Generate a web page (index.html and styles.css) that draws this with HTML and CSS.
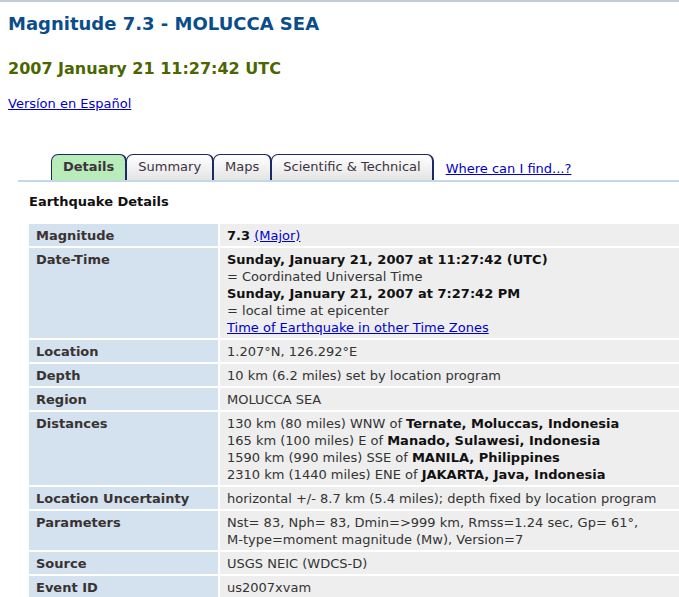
FILE: index.html
```html
<!DOCTYPE html>
<html lang="en">
<head>
    <meta charset="UTF-8">
    <title>Magnitude 7.3 - MOLUCCA SEA</title>
    <link rel="stylesheet" href="styles.css">
</head>
<body>
    <div class="page">
        <h1 class="title">Magnitude 7.3 - MOLUCCA SEA</h1>
        <h2 class="date">2007 January 21 11:27:42 UTC</h2>
        <p class="lang"><a href="#">Versíon en Español</a></p>

        <div class="tabbar">
            <ul class="tabs">
                <li class="tab active">Details</li>
                <li class="tab">Summary</li>
                <li class="tab">Maps</li>
                <li class="tab">Scientific &amp; Technical</li>
            </ul>
            <a class="tab-help" href="#">Where can I find...?</a>
        </div>

        <div class="details">
            <h3>Earthquake Details</h3>
            <div class="info">
                <div class="label">Magnitude</div>
                <div class="value"><b>7.3</b> <a href="#">(Major)</a></div>

                <div class="label">Date-Time</div>
                <div class="value">
                    <b>Sunday, January 21, 2007 at 11:27:42 (UTC)</b><br>
                    = Coordinated Universal Time<br>
                    <b>Sunday, January 21, 2007 at 7:27:42 PM</b><br>
                    = local time at epicenter<br>
                    <a href="#">Time of Earthquake in other Time Zones</a>
                </div>

                <div class="label">Location</div>
                <div class="value">1.207°N, 126.292°E</div>

                <div class="label">Depth</div>
                <div class="value">10 km (6.2 miles) set by location program</div>

                <div class="label">Region</div>
                <div class="value">MOLUCCA SEA</div>

                <div class="label">Distances</div>
                <div class="value">
                    130 km (80 miles) WNW of <b>Ternate, Moluccas, Indonesia</b><br>
                    165 km (100 miles) E of <b>Manado, Sulawesi, Indonesia</b><br>
                    1590 km (990 miles) SSE of <b>MANILA, Philippines</b><br>
                    2310 km (1440 miles) ENE of <b>JAKARTA, Java, Indonesia</b>
                </div>

                <div class="label">Location Uncertainty</div>
                <div class="value">horizontal +/- 8.7 km (5.4 miles); depth fixed by location program</div>

                <div class="label">Parameters</div>
                <div class="value">
                    Nst= 83, Nph= 83, Dmin=&gt;999 km, Rmss=1.24 sec, Gp= 61°,<br>
                    M-type=moment magnitude (Mw), Version=7
                </div>

                <div class="label">Source</div>
                <div class="value">USGS NEIC (WDCS-D)</div>

                <div class="label">Event ID</div>
                <div class="value">us2007xvam</div>
            </div>
        </div>
    </div>
</body>
</html>
```

FILE: styles.css
```css
html, body {
    margin: 0;
    padding: 0;
    overflow: hidden;
}
body {
    font-family: "DejaVu Sans", Verdana, sans-serif;
    font-size: 13px;
    color: #333;
    background: #fff;
    border-top: 2px solid #c3cdd6;
}
a {
    color: #0000cc;
}
.page {
    padding: 0 0 0 8px;
}
.title {
    color: #0b4d8b;
    font-size: 18px;
    margin: 0;
    padding-top: 11px;
    line-height: 21px;
}
.date {
    color: #4b6600;
    font-size: 16px;
    margin: 25px 0 0;
    line-height: 19px;
}
.lang {
    margin: 17px 0 0;
    line-height: 17px;
}

/* tabs */
.tabbar {
    display: flex;
    align-items: flex-end;
    margin: 42px 0 0 10px;
    padding-left: 33px;
    border-bottom: 2px solid #c5d8e6;
}
.tabs {
    display: flex;
    list-style: none;
    margin: 0;
    padding: 0;
}
.tab {
    height: 25px;
    line-height: 24px;
    padding: 0 11px;
    border: 1px solid #1b2a66;
    border-right-width: 2px;
    border-bottom: none;
    border-radius: 7px 7px 0 0;
    background: linear-gradient(#ffffff, #e4e4e4);
    color: #3d3340;
}
.tab + .tab {
    margin-left: -1px;
}
.tab.active {
    background: #b8ecb8;
    font-weight: bold;
}
.tab-help {
    margin: 0 0 3px 12px;
    line-height: 17px;
}

/* details table */
.details {
    padding-left: 21px;
}
.details h3 {
    font-size: 13px;
    margin: 11px 0 0;
    line-height: 17px;
    color: #111;
}
.info {
    display: grid;
    grid-template-columns: 189px 1fr;
    gap: 2px 2px;
    margin-top: 14px;
    line-height: 17px;
}
.label {
    background: #d3e2ee;
    font-weight: bold;
    color: #3a3232;
    padding: 3px 7px 2px;
}
.value {
    background: #eeeeee;
    color: #333;
    padding: 3px 7px 2px;
    white-space: nowrap;
}
.value b {
    color: #111;
}
```
